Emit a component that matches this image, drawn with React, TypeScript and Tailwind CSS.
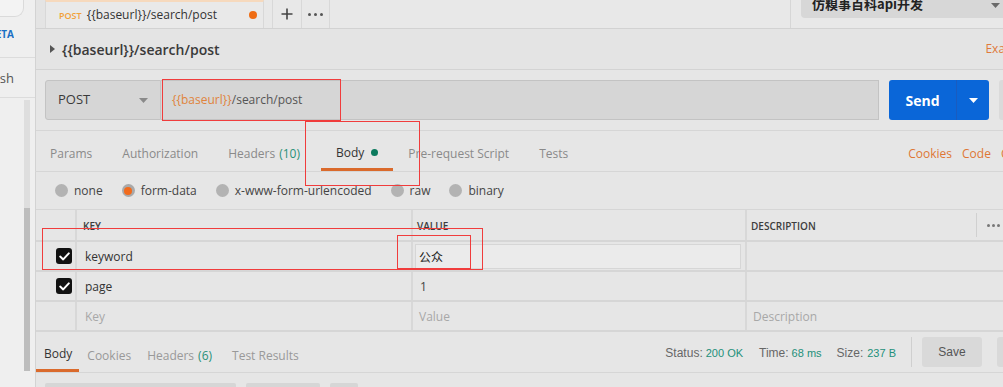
import React from "react";

const Caret = ({ className = "", color = "#777" }: { className?: string; color?: string }) => (
  <svg width="9" height="5" viewBox="0 0 9 5" className={className}>
    <path d="M0 0 L9 0 L4.5 5 Z" fill={color} />
  </svg>
);

const Check = () => (
  <div className="w-[16px] h-[16px] rounded-[3px] bg-[#111] flex items-center justify-center">
    <svg width="11" height="9" viewBox="0 0 11 9">
      <path d="M1.2 4.6 L4.2 7.4 L9.8 1.4" stroke="#fff" strokeWidth="2" fill="none" strokeLinecap="round" strokeLinejoin="round" />
    </svg>
  </div>
);

const Radio = ({ active = false }: { active?: boolean }) =>
  active ? (
    <div className="w-[13px] h-[13px] rounded-full bg-[#a9a9a9] flex items-center justify-center">
      <div className="w-[8px] h-[8px] rounded-full bg-[#f26b1d]" />
    </div>
  ) : (
    <div className="w-[13px] h-[13px] rounded-full bg-[#b3b3b3]" />
  );

export default function App() {
  return (
    <div className="relative w-[1003px] h-[387px] overflow-hidden flex bg-[#e6e6e6] text-[#505050] font-['Open_Sans',sans-serif]">
      {/* Sidebar */}
      <div className="w-[36px] shrink-0 bg-[#efefef] border-r border-[#d3d3d3] flex flex-col">
        <div className="h-[58px] border-b border-[#dcdcdc] flex flex-col">
          <div className="h-[17px] w-[24px] border-r border-b border-[#dadada] rounded-br-[9px] bg-[#f3f3f3]" />
          <div className="mt-[11px] w-[14px] overflow-hidden flex justify-end">
            <span className="whitespace-nowrap text-[10px] font-bold text-[#1b6fc4] leading-[12px]">BETA</span>
          </div>
        </div>
        <div className="h-[40px] border-b border-[#dcdcdc] flex items-center">
          <div className="w-[14px] overflow-hidden flex justify-end">
            <span className="whitespace-nowrap text-[13px] text-[#555] leading-[16px]">Refresh</span>
          </div>
        </div>
        <div className="flex-1 flex justify-end pr-[5px] pt-[2px] pb-[16px]">
          <div className="w-[6px] h-full bg-[#dedede] flex flex-col">
            <div className="h-[108px]" />
            <div className="flex-1 bg-[#bdbdbd]" />
          </div>
        </div>
      </div>

      {/* Main */}
      <div className="flex-1 flex flex-col min-w-0">
        {/* Tab bar */}
        <div className="h-[29px] shrink-0 flex border-b border-[#d2d2d2] bg-[#e8e8e8]">
          <div className="w-[9px] shrink-0 bg-[#e4e4e4]" />
          <div className="w-[219px] shrink-0 bg-[#e9e9e9] border-t-2 border-t-[#f6d9bd] border-x border-x-[#d8d8d8] flex items-center pl-[13px] pr-[6px]">
            <span className="text-[9px] font-semibold text-[#f2a23a] leading-none">POST</span>
            <span className="ml-[5px] text-[12px] text-[#333] leading-none whitespace-nowrap">{"{{baseurl}}/search/post"}</span>
            <span className="ml-auto w-[8px] h-[8px] rounded-full bg-[#ef6c13]" />
          </div>
          <div className="w-[8px] shrink-0" />
          <div className="w-[30px] shrink-0 border-x border-[#d8d8d8] flex items-center justify-center">
            <svg width="12" height="12" viewBox="0 0 12 12">
              <path d="M6 0.5 V11.5 M0.5 6 H11.5" stroke="#444" strokeWidth="1.6" />
            </svg>
          </div>
          <div className="w-[28px] shrink-0 border-r border-[#d8d8d8] flex items-center justify-center gap-[3px]">
            <span className="w-[3px] h-[3px] rounded-full bg-[#555]" />
            <span className="w-[3px] h-[3px] rounded-full bg-[#555]" />
            <span className="w-[3px] h-[3px] rounded-full bg-[#555]" />
          </div>
          <div className="flex-1" />
          <div className="w-[11px] shrink-0 border-l border-[#d6d6d6]" />
          <div className="w-[202px] shrink-0 h-[18px] bg-[#d7d7d7] rounded-bl-[4px] flex items-start pl-[11px] pr-[3px] overflow-hidden">
            <span className="text-[13px] font-bold text-[#222] leading-[13px] mt-[-3px] whitespace-nowrap font-['Noto_Sans_CJK_SC',sans-serif]">仿糗事百科api开发</span>
            <Caret className="ml-auto mt-[3px]" color="#6a6a6a" />
          </div>
        </div>

        {/* Request name */}
        <div className="h-[41px] shrink-0 flex items-center pl-[14px] border-b border-[#d3d3d3] bg-[#e4e4e4]">
          <svg width="5" height="8" viewBox="0 0 5 8">
            <path d="M0 0 L5 4 L0 8 Z" fill="#555" />
          </svg>
          <span className="ml-[7px] text-[14px] font-semibold text-[#3a3a3a] whitespace-nowrap">{"{{baseurl}}/search/post"}</span>
          <span className="ml-auto text-[12px] text-[#e07a3a] whitespace-nowrap mr-[-36px]">Examples</span>
        </div>

        {/* URL bar */}
        <div className="shrink-0 pt-[10px] pb-[10px] pl-[9px] flex border-b border-[#d6d6d6]">
          <div className="w-[116px] h-[40px] shrink-0 bg-[#d6d6d6] border border-[#c3c3c3] rounded-l-[3px] flex items-center pl-[12px] pr-[12px]">
            <span className="text-[13px] text-[#3a3a3a]">POST</span>
            <Caret className="ml-auto" color="#8a8a8a" />
          </div>
          <div className="w-[718px] h-[40px] shrink-0 bg-[#d6d6d6] border-y border-r border-[#c3c3c3] flex items-center pl-[11px]">
            <span className="text-[12px] text-[#e0843c]">{"{{baseurl}}"}</span>
            <span className="text-[12px] text-[#555]">/search/post</span>
          </div>
          <div className="w-[10px] shrink-0" />
          <div className="w-[100px] h-[40px] shrink-0 bg-[#0a66d8] rounded-[3px] flex items-center">
            <div className="w-[68px] h-full flex items-center justify-center border-r border-[#1a5cbf]">
              <span className="text-[14px] font-bold text-white">Send</span>
            </div>
            <div className="flex-1 flex items-center justify-center">
              <Caret color="#ffffff" />
            </div>
          </div>
          <div className="w-[10px] shrink-0" />
          <div className="w-[40px] h-[40px] shrink-0 bg-[#dadada] rounded-[3px]" />
        </div>

        {/* Request tabs */}
        <div className="h-[41px] shrink-0 flex items-stretch border-b border-[#d6d6d6] text-[12px] ml-[-1px]">
          <div className="px-[15px] pt-[6px] flex items-center text-[#8a8a8a]">Params</div>
          <div className="px-[15px] pt-[6px] flex items-center text-[#8a8a8a]">Authorization</div>
          <div className="pl-[15px] pr-[21px] pt-[6px] flex items-center text-[#8a8a8a]">
            Headers <span className="ml-[4px] text-[#2a9178]">(10)</span>
          </div>
          <div className="px-[15px] flex flex-col">
            <div className="flex-1 pt-[6px] flex items-center text-[#333]">
              Body <span className="ml-[7px] w-[7px] h-[7px] rounded-full bg-[#0c7a5e]" />
            </div>
            <div className="h-[3px] bg-[#da6a2c] mx-[-15px]" />
          </div>
          <div className="px-[15px] pt-[6px] flex items-center text-[#8a8a8a]">Pre-request Script</div>
          <div className="px-[15px] pt-[6px] flex items-center text-[#8a8a8a]">Tests</div>
          <div className="flex-1" />
          <div className="flex items-center pt-[6px] text-[#de7735] gap-[10px] mr-[-59px] whitespace-nowrap">
            <span>Cookies</span>
            <span>Code</span>
            <span>Comments</span>
          </div>
        </div>

        {/* Body types */}
        <div className="h-[38px] shrink-0 flex items-center pl-[19px] gap-[19px] text-[12px] text-[#444] border-b border-[#d6d6d6]">
          <div className="flex items-center gap-[6px]"><Radio /><span>none</span></div>
          <div className="flex items-center gap-[6px]"><Radio active /><span>form-data</span></div>
          <div className="flex items-center gap-[6px]"><Radio /><span>x-www-form-urlencoded</span></div>
          <div className="flex items-center gap-[6px]"><Radio /><span>raw</span></div>
          <div className="flex items-center gap-[6px]"><Radio /><span>binary</span></div>
        </div>

        {/* Table */}
        <div className="shrink-0 flex flex-col text-[12px]">
          <div className="h-[32px] flex border-b-2 border-[#d6d6d6]">
            <div className="w-[41px] shrink-0 border-r-2 border-[#d8d8d8]" />
            <div className="w-[336px] shrink-0 border-r-2 border-[#d8d8d8] flex items-center pt-[2px] pl-[6px] text-[10px] font-semibold text-[#3d3d3d]">KEY</div>
            <div className="w-[334px] shrink-0 border-r-2 border-[#d8d8d8] flex items-center pt-[2px] pl-[4px] text-[10px] font-semibold text-[#3d3d3d]">VALUE</div>
            <div className="w-[230px] shrink-0 border-r border-[#d0d0d0] my-[3px] flex items-center pt-[2px] pl-[4px] text-[10px] font-semibold text-[#3d3d3d]">DESCRIPTION</div>
            <div className="flex-1 flex items-center pl-[10px] gap-[2px]">
              <span className="w-[3px] h-[3px] rounded-full bg-[#777]" />
              <span className="w-[3px] h-[3px] rounded-full bg-[#777]" />
              <span className="w-[3px] h-[3px] rounded-full bg-[#777]" />
            </div>
          </div>
          {/* keyword */}
          <div className="h-[30px] flex border-b-2 border-[#d6d6d6]">
            <div className="w-[41px] shrink-0 border-r-2 border-[#d8d8d8] flex items-center pl-[20px]"><Check /></div>
            <div className="w-[336px] shrink-0 border-r-2 border-[#d8d8d8] flex items-center pt-[2px] pl-[8px] text-[#333]">keyword</div>
            <div className="w-[334px] shrink-0 border-r-2 border-[#d8d8d8] flex items-center pl-[2px] pr-[4px]">
              <div className="w-full h-[25px] bg-[#ebebeb] border border-[#d6d6d6] flex items-center pt-[1px] pl-[3px] text-[#222] font-['Noto_Sans_CJK_SC',sans-serif]">公众</div>
            </div>
            <div className="flex-1" />
          </div>
          {/* page */}
          <div className="h-[30px] flex border-b-2 border-[#d6d6d6]">
            <div className="w-[41px] shrink-0 border-r-2 border-[#d8d8d8] flex items-center pl-[20px]"><Check /></div>
            <div className="w-[336px] shrink-0 border-r-2 border-[#d8d8d8] flex items-center pt-[2px] pl-[8px] text-[#333]">page</div>
            <div className="w-[334px] shrink-0 border-r-2 border-[#d8d8d8] flex items-center pt-[2px] pl-[7px] text-[#444]">1</div>
            <div className="flex-1" />
          </div>
          {/* empty */}
          <div className="h-[30px] flex border-b-2 border-[#d6d6d6]">
            <div className="w-[41px] shrink-0 border-r-2 border-[#d8d8d8]" />
            <div className="w-[336px] shrink-0 border-r-2 border-[#d8d8d8] flex items-center pt-[2px] pl-[8px] text-[#a8a8a8]">Key</div>
            <div className="w-[334px] shrink-0 border-r-2 border-[#d8d8d8] flex items-center pt-[2px] pl-[6px] text-[#a8a8a8]">Value</div>
            <div className="flex-1 flex items-center pt-[2px] pl-[6px] text-[#a8a8a8]">Description</div>
          </div>
        </div>

        {/* Response bar */}
        <div className="h-[41px] shrink-0 flex items-stretch border-b border-[#d6d6d6] text-[12px]">
          <div className="pl-[8px] pr-[7px] flex flex-col">
            <div className="flex-1 pt-[7px] flex items-center text-[#333]">Body</div>
            <div className="h-[3px] bg-[#da6a2c] ml-[-8px] mr-[-7px]" />
          </div>
          <div className="px-[8px] pt-[7px] flex items-center text-[#999]">Cookies</div>
          <div className="px-[8px] pt-[7px] flex items-center text-[#999]">
            Headers <span className="ml-[4px] text-[#2a9178]">(6)</span>
          </div>
          <div className="px-[12px] pt-[7px] flex items-center text-[#999]">Test Results</div>
          <div className="flex-1" />
          <div className="flex items-center pt-[2px] font-['Liberation_Sans',Arial,sans-serif] text-[12px] text-[#666] whitespace-nowrap">
            <span>Status:</span><span className="ml-[3px] text-[11px] text-[#23907a]">200 OK</span>
            <span className="ml-[16px]">Time:</span><span className="ml-[3px] text-[11px] text-[#23907a]">68 ms</span>
            <span className="ml-[15px]">Size:</span><span className="ml-[4px] text-[11px] text-[#23907a]">237 B</span>
          </div>
          <div className="ml-[15px] my-[5px] w-px bg-[#cfcfcf]" />
          <div className="ml-[10px] my-[5px] w-[60px] bg-[#d9d9d9] rounded-[3px] flex items-center justify-center font-['Liberation_Sans',Arial,sans-serif] text-[#555]">Save</div>
          <div className="ml-[15px] my-[5px] w-[20px] bg-[#d9d9d9] rounded-l-[3px] mr-[-14px]" />
        </div>

        {/* Bottom strip */}
        <div className="flex-1 flex items-end pl-[9px] gap-[10px]">
          <div className="w-[191px] h-[4px] bg-[#d6d6d6] rounded-t-[2px]" />
          <div className="w-[74px] h-[4px] bg-[#d6d6d6] rounded-t-[2px]" />
          <div className="w-[28px] h-[4px] bg-[#d6d6d6] rounded-t-[2px]" />
        </div>
      </div>

      {/* Red annotation boxes */}
      <div className="absolute left-[162px] top-[79px] w-[179px] h-[42px] border border-[#f03c3c] pointer-events-none" />
      <div className="absolute left-[305px] top-[121px] w-[115px] h-[65px] border border-[#f03c3c] pointer-events-none" />
      <div className="absolute left-[42px] top-[228px] w-[441px] h-[42px] border border-[#f03c3c] pointer-events-none" />
      <div className="absolute left-[397px] top-[235px] w-[74px] h-[34px] border border-[#f03c3c] pointer-events-none" />
    </div>
  );
}
